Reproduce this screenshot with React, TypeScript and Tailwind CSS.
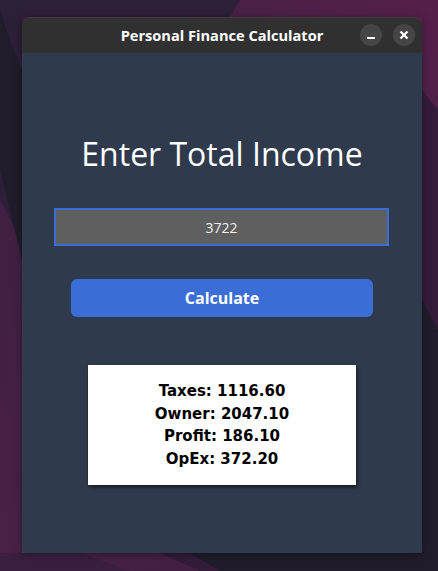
import React from "react";

export default function App() {
  return (
    <div className="relative w-[438px] h-[571px] overflow-hidden bg-[#2a1d36]">
      <svg className="absolute inset-0" width="438" height="571" viewBox="0 0 438 571">
        <defs>
          <linearGradient id="bgp" x1="0" y1="1" x2="1" y2="0">
            <stop offset="0" stopColor="#4a2048" />
            <stop offset="0.5" stopColor="#3a1f40" />
            <stop offset="1" stopColor="#56204c" />
          </linearGradient>
        </defs>
        <rect width="438" height="571" fill="url(#bgp)" />
        <polygon points="0,0 240,0 230,17 22,17 22,240 0,200" fill="#2c1f38" />
        <polygon points="0,10 10,40 22,70 22,260 0,170" fill="#201c2c" />
        <polygon points="422,90 438,110 438,571 200,571 160,553 422,553" fill="#331c3a" />
        <polygon points="422,300 438,330 438,571 220,571 190,553 422,553" fill="#201c2c" />
        <polygon points="80,553 130,571 0,571 0,553" fill="#3a1f40" />
      </svg>
      <div className="relative pt-[17px] pl-[22px]">
        <div className="w-[400px] h-[536px] flex flex-col shadow-[0_2px_8px_rgba(0,0,0,0.35)]">
          <div className="h-[36px] bg-[#303030] rounded-t-[9px] flex items-center relative border-t border-[#3c3c3c]">
            <div
              className="flex-1 text-center text-white font-bold text-[14.6px]"
              style={{ fontFamily: '"Open Sans", "Noto Sans", sans-serif' }}
            >
              Personal Finance Calculator
            </div>
            <div className="absolute right-[7px] top-[6px] flex gap-[11px]">
              <div className="w-[22px] h-[22px] rounded-full bg-[#454545] flex items-center justify-center">
                <div className="w-[8px] h-[2px] bg-white mt-[5px]" />
              </div>
              <div className="w-[22px] h-[22px] rounded-full bg-[#454545] flex items-center justify-center">
                <svg width="10" height="10" viewBox="0 0 10 10">
                  <path d="M1.5 1.5 L8.5 8.5 M8.5 1.5 L1.5 8.5" stroke="white" strokeWidth="2.2" />
                </svg>
              </div>
            </div>
          </div>
          <div className="flex-1 bg-[#2f3a4c] flex flex-col items-center">
            <div
              className="mt-[81px] text-white text-[32px] leading-[40px]"
              style={{ fontFamily: '"Open Sans", "Noto Sans", sans-serif' }}
            >
              Enter Total Income
            </div>
            <div
              className="mt-[34px] w-[335px] h-[38px] ml-[-1px] border-2 border-[#3a6fd6] bg-[#5f5f5f] flex items-center justify-center text-[#f0f0f0] text-[14px]"
              style={{ fontFamily: '"Open Sans", "Noto Sans", sans-serif' }}
            >
              3722
            </div>
            <div
              className="mt-[33px] w-[302px] h-[38px] rounded-[6px] bg-[#3a6dd6] flex items-center justify-center text-white font-bold text-[16px]"
              style={{ fontFamily: '"Open Sans", "Noto Sans", sans-serif' }}
            >
              Calculate
            </div>
            <div
              className="mt-[48px] w-[268px] h-[120px] bg-white flex flex-col items-center justify-center text-black font-bold text-[15px] leading-[22.5px] shadow-[1px_2px_4px_rgba(0,0,0,0.6)]"
              style={{ fontFamily: '"DejaVu Sans", Verdana, sans-serif' }}
            >
              <div>Taxes: 1116.60</div>
              <div>Owner: 2047.10</div>
              <div>Profit: 186.10</div>
              <div>OpEx: 372.20</div>
            </div>
          </div>
        </div>
      </div>
    </div>
  );
}
